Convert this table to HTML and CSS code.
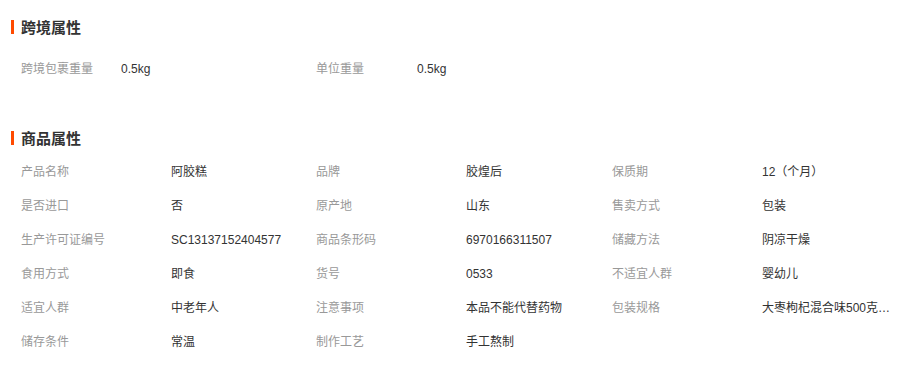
FILE: index.html
```html
<!DOCTYPE html>
<html lang="zh-CN">
<head>
<meta charset="utf-8">
<link rel="stylesheet" href="styles.css">
</head>
<body>
<div class="page">
  <section class="attr-section">
    <h3 class="attr-title"><span class="bar"></span>跨境属性</h3>
    <div class="grid grid-cross">
      <div class="label">跨境包裹重量</div><div class="value">0.5kg</div>
      <div class="label">单位重量</div><div class="value">0.5kg</div>
    </div>
  </section>
  <section class="attr-section second">
    <h3 class="attr-title"><span class="bar"></span>商品属性</h3>
    <div class="grid grid-goods">
      <div class="label">产品名称</div><div class="value">阿胶糕</div>
      <div class="label">品牌</div><div class="value">胶煌后</div>
      <div class="label">保质期</div><div class="value">12（个月）</div>

      <div class="label">是否进口</div><div class="value">否</div>
      <div class="label">原产地</div><div class="value">山东</div>
      <div class="label">售卖方式</div><div class="value">包装</div>

      <div class="label">生产许可证编号</div><div class="value">SC13137152404577</div>
      <div class="label">商品条形码</div><div class="value">6970166311507</div>
      <div class="label">储藏方法</div><div class="value">阴凉干燥</div>

      <div class="label">食用方式</div><div class="value">即食</div>
      <div class="label">货号</div><div class="value">0533</div>
      <div class="label">不适宜人群</div><div class="value">婴幼儿</div>

      <div class="label">适宜人群</div><div class="value">中老年人</div>
      <div class="label">注意事项</div><div class="value">本品不能代替药物</div>
      <div class="label">包装规格</div><div class="value" title="大枣枸杞混合味500克*2盒装">大枣枸杞混合味500克*2盒装</div>

      <div class="label">储存条件</div><div class="value">常温</div>
      <div class="label">制作工艺</div><div class="value">手工熬制</div>
    </div>
  </section>
</div>
</body>
</html>
```

FILE: styles.css
```css
html, body {
  margin: 0;
  padding: 0;
  background: #fff;
}

.page {
  padding: 16px 11px 0 11px;
  font-family: "Liberation Sans", "Noto Sans CJK SC", sans-serif;
  font-size: 12px;
  color: #333;
}

.attr-title {
  display: flex;
  align-items: center;
  height: 21px;
  margin: 0;
  font-size: 15px;
  font-weight: bold;
  color: #333;
}

.bar {
  width: 3px;
  height: 14px;
  background: #ff4a00;
  margin-right: 7px;
}

.grid {
  display: grid;
  padding-left: 10px;
}

.grid-cross {
  grid-template-columns: 100px 195px 101px 1fr;
  grid-auto-rows: 34px;
  margin-top: 15px;
}

.second {
  margin-top: 41px;
}

.grid-goods {
  grid-template-columns: 150px 145px 150px 146px 150px 130px;
  grid-auto-rows: 34px;
  margin-top: 7px;
}

.label,
.value {
  line-height: 34px;
  white-space: nowrap;
  overflow: hidden;
  text-overflow: ellipsis;
}

.label {
  color: #999;
}

.value {
  color: #333;
}
```
